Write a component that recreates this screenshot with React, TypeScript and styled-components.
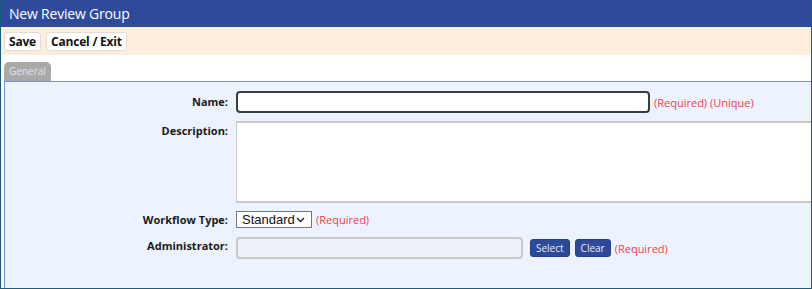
import React from "react";
import styled, { createGlobalStyle } from "styled-components";

const Global = createGlobalStyle`
  html, body { margin: 0; padding: 0; background: #ffffff; }
  body { font-family: "Open Sans", "Noto Sans", Arial, sans-serif; }
  * { box-sizing: border-box; }
`;

const Frame = styled.div`
  width: 812px;
  height: 289px;
  border: 1px solid #1c5b7d;
  border-top: none;
  display: flex;
  flex-direction: column;
  overflow: hidden;
  background: #ffffff;
`;

const Header = styled.div`
  height: 27px;
  background: #2f4a9b;
  color: #ffffff;
  font-size: 14px;
  letter-spacing: -0.2px;
  line-height: 27px;
  padding-left: 8px;
  flex: none;
`;

const Toolbar = styled.div`
  height: 28px;
  background: #fbeedc;
  display: flex;
  align-items: center;
  gap: 5px;
  padding-left: 3px;
  flex: none;
`;

const ToolButton = styled.button`
  height: 19px;
  background: #ffffff;
  border: 1px solid #e6ddd0;
  border-radius: 3px;
  font-family: inherit;
  font-weight: 700;
  font-size: 12px;
  letter-spacing: -0.2px;
  color: #111111;
  padding: 0 4px;
  line-height: 17px;
  margin-top: 1px;
`;

const TabStrip = styled.div`
  height: 26px;
  display: flex;
  align-items: flex-end;
  padding-left: 3px;
  flex: none;
`;

const Tab = styled.div`
  height: 19px;
  width: 47px;
  background: #a9a9a9;
  border-radius: 5px 5px 0 0;
  color: #e6e6e6;
  font-size: 10px;
  line-height: 19px;
  text-align: center;
`;

const Panel = styled.div`
  flex: 1;
  margin-left: 3px;
  border-left: 1px solid #7b8fd3;
  border-top: 1px solid #7b8fd3;
  background: #edf3fe;
  padding-top: 9px;
`;

const Form = styled.div`
  display: grid;
  grid-template-columns: 223px 1fr;
  column-gap: 8px;
`;

const Label = styled.div<{ $pt?: number; $mb?: number }>`
  font-weight: 700;
  font-size: 11px;
  color: #1a1a1a;
  text-align: right;
  padding-top: ${(p) => p.$pt ?? 0}px;
  margin-bottom: ${(p) => p.$mb ?? 8}px;
`;

const Field = styled.div<{ $mb?: number }>`
  display: flex;
  align-items: center;
  margin-bottom: ${(p) => p.$mb ?? 8}px;
  min-width: 0;
`;

const Req = styled.span`
  color: #f0414f;
  font-size: 11px;
  margin-left: 4px;
  white-space: nowrap;
`;

const NameInput = styled.input`
  width: 414px;
  height: 22px;
  border: 2px solid #3c3c3c;
  border-radius: 4px;
  background: #ffffff;
  outline: none;
  flex: none;
`;

const Description = styled.textarea`
  width: 600px;
  height: 82px;
  border: none;
  border-top: 2px solid #c9c9c9;
  border-bottom: 2px solid #c9c9c9;
  border-left: 1px solid #c9c9c9;
  background: #ffffff;
  resize: none;
  outline: none;
  flex: none;
`;

const Select = styled.div`
  width: 76px;
  height: 17px;
  border: 1px solid #767676;
  background: #ffffff;
  display: flex;
  align-items: center;
  justify-content: space-between;
  padding: 0 6px 0 5px;
  font-family: "Liberation Sans", Arial, sans-serif;
  font-size: 13px;
  color: #111111;
  flex: none;
`;

const AdminInput = styled.input`
  width: 287px;
  height: 22px;
  border: 2px solid #c6c8cc;
  border-radius: 4px;
  background: #eef1f7;
  outline: none;
  flex: none;
`;

const BlueButton = styled.button<{ $ml: number }>`
  height: 18px;
  margin-left: ${(p) => p.$ml}px;
  background: #2d4a9a;
  border: 1px solid #23408c;
  border-radius: 3px;
  color: #e9edf8;
  font-family: inherit;
  font-size: 10px;
  padding: 0 5px;
  line-height: 16px;
  flex: none;
`;

export default function App() {
  return (
    <>
      <Global />
      <Frame>
        <Header>New Review Group</Header>
        <Toolbar>
          <ToolButton>Save</ToolButton>
          <ToolButton>Cancel / Exit</ToolButton>
        </Toolbar>
        <TabStrip>
          <Tab>General</Tab>
        </TabStrip>
        <Panel>
          <Form>
            <Label $pt={3}>Name:</Label>
            <Field>
              <NameInput />
              <Req>(Required) (Unique)</Req>
            </Field>

            <Label $pt={2}>Description:</Label>
            <Field>
              <Description />
            </Field>

            <Label $pt={1} $mb={9}>Workflow Type:</Label>
            <Field $mb={9}>
              <Select>
                <span>Standard</span>
                <svg width="9" height="6" viewBox="0 0 9 6">
                  <path d="M1 1 L4.5 4.5 L8 1" fill="none" stroke="#222" strokeWidth="1.4" />
                </svg>
              </Select>
              <Req>(Required)</Req>
            </Field>

            <Label $pt={1}>Administrator:</Label>
            <Field>
              <AdminInput />
              <BlueButton $ml={7}>Select</BlueButton>
              <BlueButton $ml={5}>Clear</BlueButton>
              <Req>(Required)</Req>
            </Field>
          </Form>
        </Panel>
      </Frame>
    </>
  );
}
